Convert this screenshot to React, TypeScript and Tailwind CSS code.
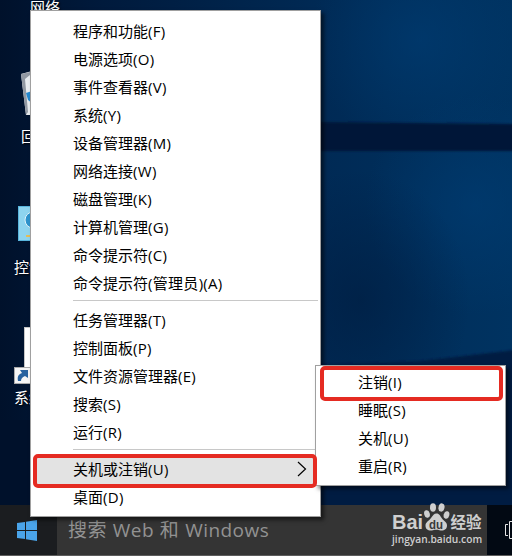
import React from 'react';

const systemItems = [
  '程序和功能(F)',
  '电源选项(O)',
  '事件查看器(V)',
  '系统(Y)',
  '设备管理器(M)',
  '网络连接(W)',
  '磁盘管理(K)',
  '计算机管理(G)',
  '命令提示符(C)',
  '命令提示符(管理员)(A)',
];

const toolItems = ['任务管理器(T)', '控制面板(P)', '文件资源管理器(E)', '搜索(S)', '运行(R)'];

const powerItems = ['睡眠(S)', '关机(U)', '重启(R)'];

// The access key in brackets is set a little wider than the label
const Label = ({ text }: { text: string }) => {
  const split = text.indexOf('(');
  return (
    <span className="whitespace-nowrap pb-0.5">
      {text.slice(0, split)}
      <span className="tracking-[0.3px]">{text.slice(split)}</span>
    </span>
  );
};

const MenuItem = ({ label }: { label: string }) => (
  <li className="h-7 flex items-center pl-[42px]">
    <Label text={label} />
  </li>
);

const Divider = () => <li className="ml-[42px] mr-0.5 mt-0.5 mb-1.5 h-px bg-[#c8c8c8]" />;

const Wallpaper = () => (
  <svg className="absolute inset-0" width="512" height="556" viewBox="0 0 512 556">
    <defs>
      <linearGradient id="base" x1="0" x2="1" y1="0" y2="0">
        <stop offset="0" stopColor="#00112b" />
        <stop offset="0.2" stopColor="#001a3c" />
        <stop offset="0.63" stopColor="#002a55" />
        <stop offset="1" stopColor="#003361" />
      </linearGradient>
      <radialGradient id="glow">
        <stop offset="0" stopColor="#003d74" stopOpacity="0.6" />
        <stop offset="1" stopColor="#003d74" stopOpacity="0" />
      </radialGradient>
      <radialGradient id="shade">
        <stop offset="0" stopColor="#001a3c" stopOpacity="0.55" />
        <stop offset="1" stopColor="#001a3c" stopOpacity="0" />
      </radialGradient>
      <filter id="soft">
        <feGaussianBlur stdDeviation="1" />
      </filter>
    </defs>
    <rect width="512" height="556" fill="url(#base)" />
    <ellipse cx="420" cy="40" rx="110" ry="110" fill="url(#glow)" />
    <ellipse cx="475" cy="205" rx="110" ry="110" fill="url(#glow)" />
    <ellipse cx="360" cy="300" rx="110" ry="130" fill="url(#shade)" />
    <path d="M315 122 L516 124 V151 H315 Z" fill="#001837" filter="url(#soft)" />
    <path d="M315 365 L420 361 L516 350 V510 H315 Z" fill="#001f43" filter="url(#soft)" />
    <path d="M0 420 H40 V506 H0 Z" fill="#00112b" />
  </svg>
);

// Desktop shortcuts, mostly hidden behind the menu
const DesktopIcons = () => (
  <div className="text-[15px] leading-5 text-white whitespace-nowrap [text-shadow:1px_1px_2px_#000]">
    <span className="absolute left-[30px] top-[-3px]">网络</span>

    <svg className="absolute left-[20px] top-[71px]" width="32" height="46" viewBox="0 0 32 46">
      <path d="M1 3 L12 0 H32 V44 H6 Z" fill="#e9edf0" />
      <path d="M1 3 L10 1 V4 L5 8 L8 41 L6 44 Z" fill="#9299a3" />
      <path d="M6 22 L12 20 V32 L8 29 Z" fill="#2589cf" />
    </svg>
    <span className="absolute left-[21px] top-[126px]">回收站</span>

    <svg className="absolute left-[18px] top-[206px]" width="40" height="36" viewBox="0 0 40 36">
      <rect x="0.5" y="0.5" width="39" height="34" fill="#8ed4ef" stroke="#58b5dd" />
      <circle cx="15" cy="14" r="8" fill="#2e93cc" stroke="#e2f4fb" />
      <path d="M8 30 H30" stroke="#e5bd58" strokeWidth="2" />
    </svg>
    <span className="absolute left-[14px] top-[257px]">控制面板</span>

    <svg className="absolute left-[14px] top-[327px]" width="30" height="58" viewBox="0 0 30 58">
      <rect x="10.5" y="0.5" width="20" height="48" fill="#fff" stroke="#c6c6c6" />
      <rect x="0.5" y="40.5" width="18" height="16" fill="#f5f5f5" stroke="#aaa" />
      <path d="M4 54 C3 49 5 47 8 46 L6 43 L14 43 V51 L11 49 C8 50 7 52 7 54 Z" fill="#28629f" />
    </svg>
    <span className="absolute left-[14px] top-[387px]">系统</span>
  </div>
);

const WatermarkLogo = () => (
  <div className="absolute left-[392px] top-[501px] w-[92px] text-[#cfcfcf]">
    <svg className="overflow-visible" width="92" height="33" viewBox="0 0 92 33" fill="currentColor">
      <text x="0" y="28" fontSize="20" fontWeight="700" textLength="31" lengthAdjust="spacingAndGlyphs" fontFamily="Liberation Sans, sans-serif">Bai</text>
      <ellipse cx="35" cy="13" rx="2.800" ry="3.800" transform="rotate(-15 35 13)" />
      <ellipse cx="41" cy="6.500" rx="3" ry="4.200" />
      <ellipse cx="49.500" cy="6.500" rx="3" ry="4.200" transform="rotate(12 49.500 6.500)" />
      <ellipse cx="54.500" cy="14" rx="2.800" ry="3.800" transform="rotate(15 54.500 14)" />
      <path d="M44.500 12.500 C47.500 12.500 48 15 50 17.500 C52 20 55 21 55 24.500 C55 29 51 30 47.500 29.200 C45 28.700 43 28.700 41 29.200 C37 30 33.500 29 33.500 24.500 C33.500 21 37 20 39 17 C41 14.500 42 12.500 44.500 12.500 Z" />
      <text x="37" y="28" fontSize="13" fontWeight="700" fill="#3a3a3a" textLength="14" lengthAdjust="spacingAndGlyphs" fontFamily="Liberation Sans, sans-serif">du</text>
      <text x="58.500" y="27" fontSize="15.500" fontWeight="700" fontFamily="Noto Sans CJK SC, sans-serif">经验</text>
    </svg>
    <div className="-mt-px font-['Open_Sans',sans-serif] text-[10.2px] leading-[12px] font-semibold whitespace-nowrap">
      jingyan.baidu.com
    </div>
  </div>
);

const Taskbar = () => (
  <div className="relative h-[51px] flex border-b border-[#5c5c5c] bg-[#343434]">
    <div className="w-[57px] flex items-center pl-[17px] bg-[#1b1d20]">
      <svg width="20" height="21" viewBox="0 0 20 21" fill="#4aa4ea">
        <path d="M0 3 L8 2 V10 H0 Z M9 1.800 L20 0 V10 H9 Z M0 11 H8 V19 L0 18 Z M9 11 H20 V21 L9 19.200 Z" />
      </svg>
    </div>
    <div className="flex-1 flex items-center pl-[11px] text-[19px] text-[#929292] tracking-[0.45px] [word-spacing:0.5px] whitespace-nowrap">
      搜索 Web 和 Windows
    </div>
    <div className="w-[25px] flex items-center justify-end bg-[#020913]">
      <svg width="7" height="18" viewBox="0 0 7 18" fill="none" stroke="#e5e5e5">
        <path d="M3 3.500 H0.500 V14.500 H3 M8 0.500 H4.500 V17.500 H8" />
      </svg>
    </div>
  </div>
);

const App = () => {
  return (
    <div className="relative w-[512px] h-[556px] flex flex-col justify-end overflow-hidden bg-[#001837] font-['Open_Sans','Noto_Sans_CJK_SC',sans-serif]">
      <Wallpaper />
      <DesktopIcons />
      <Taskbar />
      <WatermarkLogo />

      {/* Power user menu */}
      <ul className="absolute left-[30px] top-[10px] w-[291px] h-[507px] pt-[7px] bg-white border border-[#a0a0a0] text-[15px] text-black shadow-[3px_3px_4px_rgba(0,0,0,0.55)]">
        {systemItems.map((label) => (
          <MenuItem key={label} label={label} />
        ))}
        <Divider />
        {toolItems.map((label) => (
          <MenuItem key={label} label={label} />
        ))}
        <Divider />
        <li className="h-7 mx-[3px] pl-[39px] pr-[10px] flex items-center justify-between bg-[#e3e3e3]">
          <Label text="关机或注销(U)" />
          <svg className="-mt-0.5" width="10" height="16" viewBox="0 0 10 16" fill="none" stroke="#000" strokeWidth="1.200">
            <path d="M1 1 L8.500 8 L1 15" />
          </svg>
        </li>
        <MenuItem label="桌面(D)" />
      </ul>

      {/* Sign out submenu */}
      <ul className="absolute left-[315px] top-[365px] w-[191px] h-[121px] pt-[3px] bg-white border border-[#a0a0a0] text-[15px] text-black shadow-[3px_3px_4px_rgba(0,0,0,0.5)]">
        <li className="relative h-7 flex items-center pl-[42px]">
          <Label text="注销(I)" />
          <div className="absolute left-1 right-0.5 -top-[3px] -bottom-1 border-4 border-[#e52b22] rounded-[5px]" />
        </li>
        {powerItems.map((label) => (
          <MenuItem key={label} label={label} />
        ))}
      </ul>

      {/* Frame around the open entry, drawn over both menus */}
      <div className="absolute left-[33px] top-[454px] w-[284px] h-[34px] border-4 border-[#e52b22] rounded-[5px]" />
    </div>
  );
};

export default App;
